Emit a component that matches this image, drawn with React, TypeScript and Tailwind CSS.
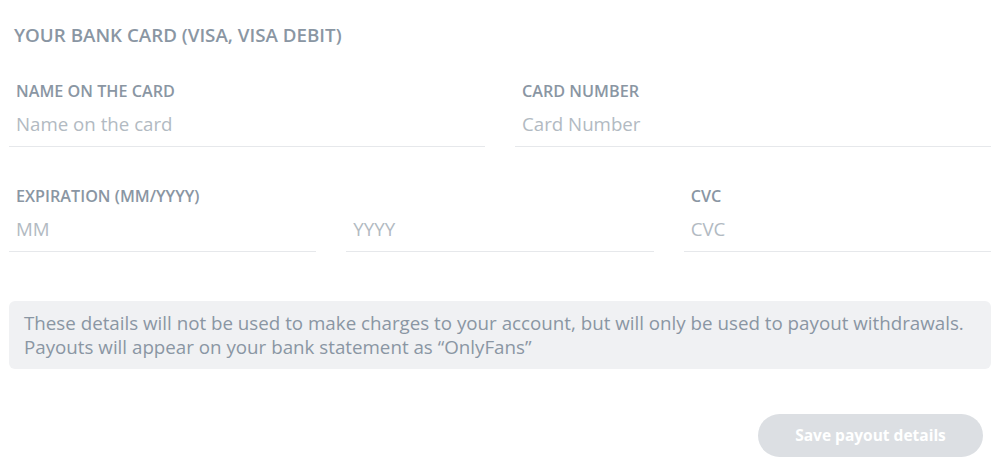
import React from "react";

function Field({ label, placeholder, className = "" }: { label?: string; placeholder: string; className?: string }) {
  return (
    <div className={"flex flex-col " + className}>
      <div className="h-5 pl-[7px] text-[16.2px] leading-5 font-semibold text-[#8a96a3]">{label ?? "\u00a0"}</div>
      <input
        placeholder={placeholder}
        className="h-[46px] w-full border-b border-[#e6e8eb] bg-transparent pl-[7px] pb-px text-[18.7px] text-[#8a96a3] outline-none placeholder:text-[#b2bac2]"
        style={{ fontFamily: "'Open Sans', sans-serif" }}
      />
    </div>
  );
}

export default function App() {
  return (
    <div
      className="min-h-[476px] w-[1003px] bg-white pl-[9px] pr-[12px] pt-[23px]"
      style={{ fontFamily: "'Open Sans', 'Noto Sans', sans-serif" }}
    >
      <div className="pl-[5px] text-[18.75px] leading-6 font-semibold text-[#8a96a3]">YOUR BANK CARD (VISA, VISA DEBIT)</div>
      <div className="mt-[34px] grid grid-cols-2 gap-x-[30px]">
        <Field label="NAME ON THE CARD" placeholder="Name on the card" />
        <Field label="CARD NUMBER" placeholder="Card Number" />
      </div>
      <div className="mt-[39px] grid grid-cols-3 gap-x-[30px]">
        <Field label="EXPIRATION (MM/YYYY)" placeholder="MM" />
        <Field placeholder="YYYY" />
        <Field label="CVC" placeholder="CVC" />
      </div>
      <div className="mt-[49px] rounded-[6px] bg-[#f0f1f3] px-[15px] py-[10px] text-[18.75px] leading-6 text-[#8a96a3]">
        These details will not be used to make charges to your account, but will only be used to payout withdrawals.
        <br />
        Payouts will appear on your bank statement as “OnlyFans”
      </div>
      <div className="mt-[45px] flex justify-end pr-[8px]">
        <button className="h-[43px] w-[225px] rounded-full bg-[#dcdfe3] text-[15.5px] font-bold text-white">
          Save payout details
        </button>
      </div>
    </div>
  );
}
